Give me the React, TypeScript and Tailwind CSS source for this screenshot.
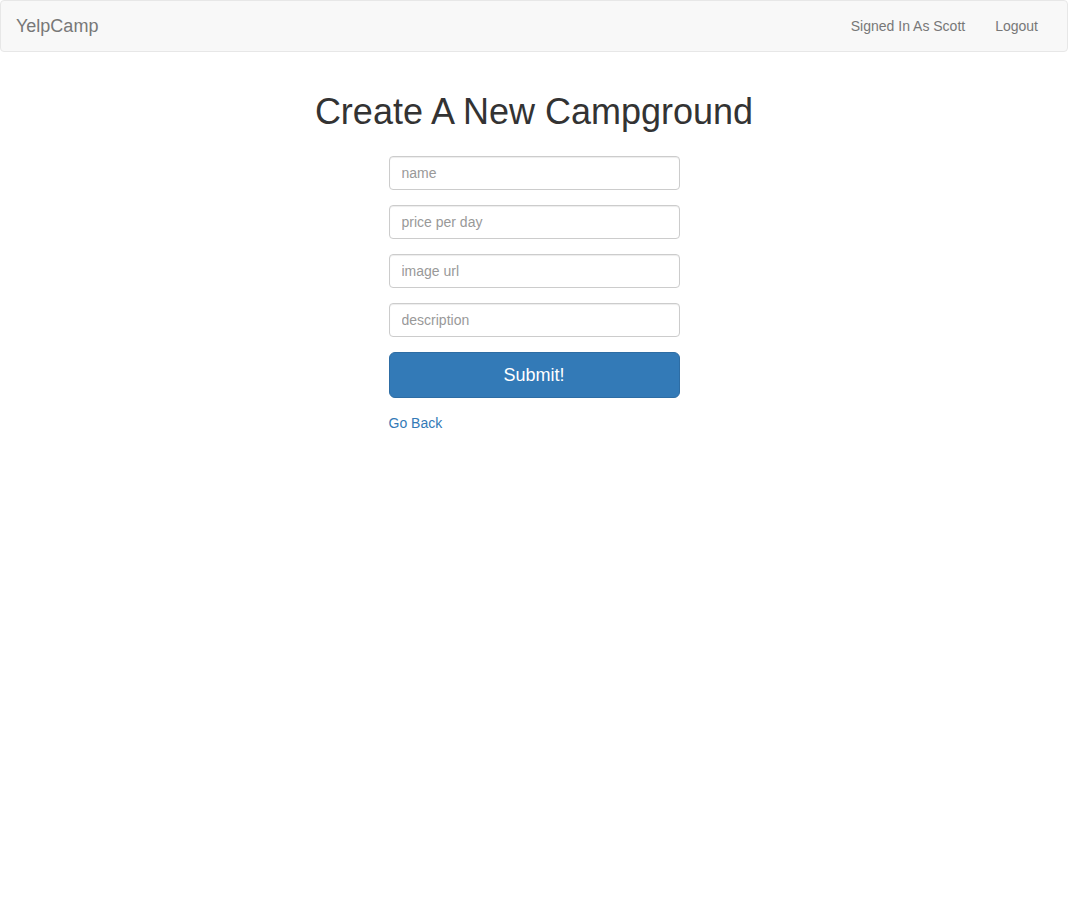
import React from 'react';

const font = { fontFamily: '"Liberation Sans", Arial, Helvetica, sans-serif' };

export default function App() {
  return (
    <div className="min-h-screen bg-white text-[14px] text-[#333]" style={font}>
      {/* Navbar */}
      <nav className="mb-[20px] h-[52px] rounded-[4px] border border-[#e7e7e7] bg-[#f8f8f8]">
        <div className="flex h-[50px] items-center justify-between pl-[15px] pr-[14px]">
          <a href="#" className="text-[18px] leading-[20px] text-[#777]">
            YelpCamp
          </a>
          <ul className="flex">
            <li>
              <a href="#" className="block px-[15px] py-[15px] leading-[20px] text-[#777]">
                Signed In As Scott
              </a>
            </li>
            <li>
              <a href="#" className="block px-[15px] py-[15px] leading-[20px] text-[#777]">
                Logout
              </a>
            </li>
          </ul>
        </div>
      </nav>

      {/* Main */}
      <div className="flex flex-col items-center">
        <h1 className="mt-[20px] mb-[24px] text-[36px] leading-[1.1] font-normal text-[#333]">
          Create A New Campground
        </h1>
        <form className="w-[291px]">
          {['name', 'price per day', 'image url', 'description'].map((p) => (
            <div key={p} className="mb-[15px]">
              <input
                type="text"
                placeholder={p}
                className="block h-[34px] w-full rounded-[4px] border border-[#ccc] bg-white px-[12px] py-[6px] text-[14px] leading-[20px] text-[#555] shadow-[inset_0_1px_1px_rgba(0,0,0,0.075)] outline-none placeholder:text-[#999]"
              />
            </div>
          ))}
          <div className="mb-[15px]">
            <button
              type="button"
              className="block h-[46px] w-full rounded-[6px] border border-[#2e6da4] bg-[#337ab7] px-[16px] py-[10px] text-[18px] leading-[24px] text-white"
            >
              Submit!
            </button>
          </div>
          <a href="#" className="block leading-[20px] text-[#337ab7]">
            Go Back
          </a>
        </form>
      </div>
    </div>
  );
}
